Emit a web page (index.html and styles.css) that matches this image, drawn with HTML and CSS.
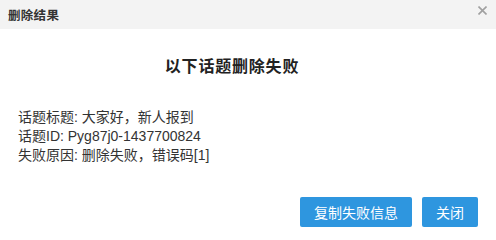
FILE: index.html
```html
<!DOCTYPE html>
<html lang="zh">
<head>
<meta charset="utf-8">
<link rel="stylesheet" href="styles.css">
</head>
<body>
<div class="dialog">
  <div class="header">
    <span class="title">删除结果</span>
    <span class="close"><svg width="9" height="9" viewBox="0 0 9 9"><path d="M0.5 0.5L8.5 8.5M8.5 0.5L0.5 8.5" stroke="#a0a0a0" stroke-width="1.6"/></svg></span>
  </div>
  <div class="content">
    <h2 class="heading">以下话题删除失败</h2>
    <div class="info">
      <div>话题标题: 大家好，新人报到</div>
      <div>话题ID: Pyg87j0-1437700824</div>
      <div>失败原因: 删除失败，错误码[1]</div>
    </div>
  </div>
  <div class="footer">
    <button class="btn btn-wide">复制失败信息</button>
    <button class="btn">关闭</button>
  </div>
</div>
</body>
</html>
```

FILE: styles.css
```css
html, body {
  margin: 0;
  padding: 0;
  background: #fff;
}
body {
  font-family: "Liberation Sans", "Noto Sans CJK SC", sans-serif;
  color: #333;
  width: 496px;
  height: 234px;
  overflow: hidden;
}
.dialog {
  display: flex;
  flex-direction: column;
  height: 234px;
}
.header {
  height: 29px;
  background: #f3f3f3;
  display: flex;
  align-items: center;
  justify-content: space-between;
  padding: 0 9px 0 8px;
}
.title {
  font-size: 12.5px;
  font-weight: bold;
  color: #333;
  letter-spacing: 0.3px;
}
.close {
  display: flex;
  margin-top: -9px;
}
.content {
  padding: 0 18px;
}
.heading {
  margin: 28px 0 0;
  padding-right: 32px;
  text-align: center;
  font-size: 16px;
  font-weight: bold;
  color: #222;
  letter-spacing: 0.8px;
  line-height: 20px;
}
.info {
  margin-top: 31px;
  font-size: 14px;
  line-height: 19px;
  color: #333;
}
.footer {
  display: flex;
  justify-content: flex-end;
  gap: 10px;
  padding: 0 18px;
  margin-top: 32px;
}
.btn {
  height: 30px;
  width: 56px;
  border: none;
  border-radius: 2px;
  background: #2e96df;
  color: #fff;
  font-family: "Liberation Sans", "Noto Sans CJK SC", sans-serif;
  font-size: 14px;
  padding: 0;
}
.btn-wide {
  width: 112px;
}
```
